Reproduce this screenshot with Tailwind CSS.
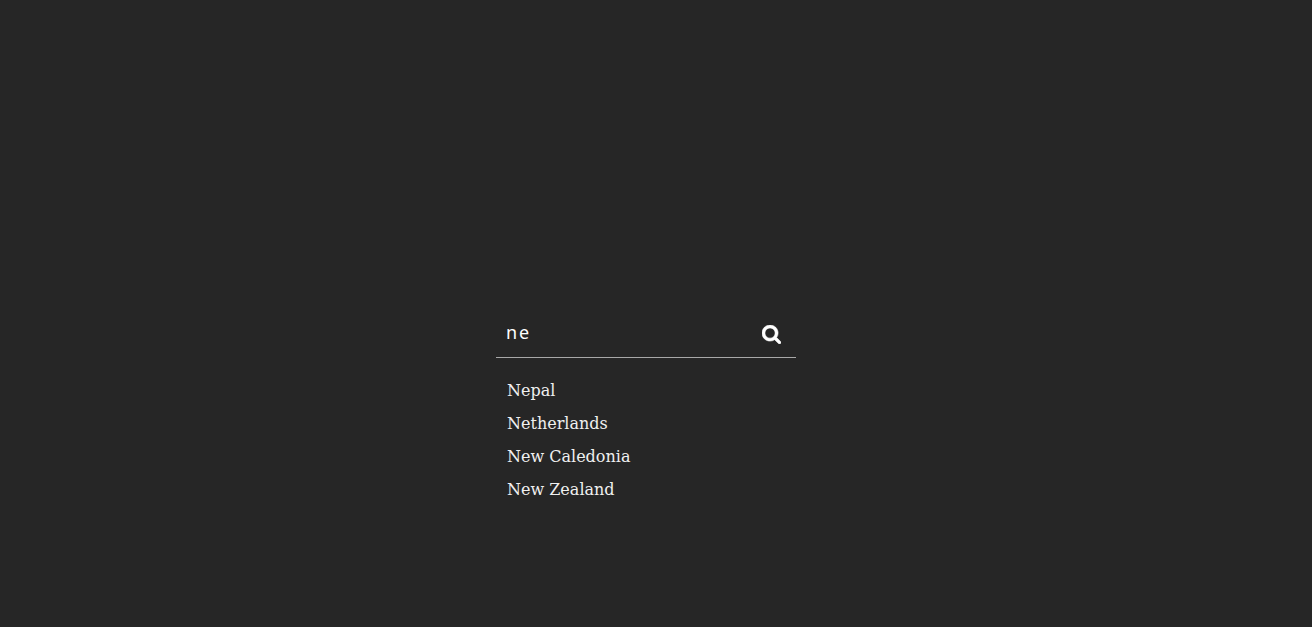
<!DOCTYPE html>
<html lang="en">
<head>
  <meta charset="UTF-8">
  <title>Country search</title>
  <script src="https://cdn.jsdelivr.net/npm/@tailwindcss/browser@4"></script>
</head>
<body class="bg-[#262626] text-white min-h-screen h-[627px] overflow-hidden flex items-start justify-center antialiased">
  <div class="w-[300px] mt-[310px] mr-[20px]">
    <!-- search box -->
    <div class="h-[48px] flex items-center justify-between border-b border-[#a8a8a8] pl-[10px] pr-[15px]">
      <span class="font-['Noto_Sans',sans-serif] text-[18px] tracking-[2px] leading-[22px] -mt-[4px]">ne</span>
      <svg class="w-[19px] h-[19px] mt-[2px]" viewBox="64 128 1664 1664" fill="#fff" stroke="#fff" stroke-width="50"><path d="M1216 832q0-185-131.500-316.500t-316.500-131.500-316.500 131.500-131.500 316.500 131.500 316.500 316.500 131.500 316.500-131.500 131.500-316.500zm512 832q0 52-38 90t-90 38q-54 0-90-38l-343-342q-179 124-399 124-143 0-273.500-55.500t-225-150-150-225-55.500-273.500 55.500-273.500 150-225 225-150 273.500-55.500 273.500 55.500 225 150 150 225 55.500 273.500q0 220-124 399l343 343q37 37 37 90z"/></svg>
    </div>
    <!-- results -->
    <ul class="mt-[16px] pl-[11px] font-['DejaVu_Serif',serif] text-[16px] leading-[33px] text-[#f0f0f0]">
      <li>Nepal</li>
      <li>Netherlands</li>
      <li>New Caledonia</li>
      <li>New Zealand</li>
    </ul>
  </div>
</body>
</html>
